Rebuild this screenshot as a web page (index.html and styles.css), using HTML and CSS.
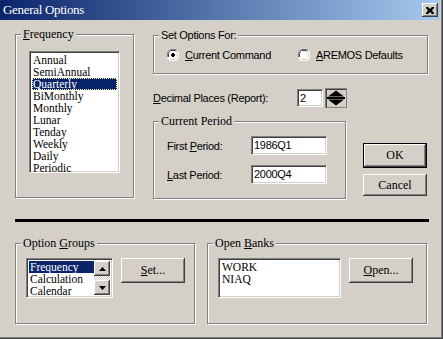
FILE: index.html
```html
<!DOCTYPE html>
<html lang="en">
<head>
    <meta charset="UTF-8">
    <title>General Options</title>
    <link rel="stylesheet" href="styles.css">
</head>
<body>
    <div class="window">
        <div class="titlebar">
            <span class="title">General Options</span>
            <div class="close-btn">
                <svg width="8" height="7" viewBox="0 0 8 7"><path d="M0 0h2l2 2 2-2h2v1l-2 2.5 2 2.5v1h-2l-2-2-2 2h-2v-1l2-2.5-2-2.5z" fill="#000"/></svg>
            </div>
        </div>

        <div class="dialog-body">
            <div class="top-row">
                <fieldset class="group freq-group">
                    <legend class="serif"><u>F</u>requency</legend>
                    <div class="listbox freq-list">
                        <div class="item">Annual</div>
                        <div class="item">SemiAnnual</div>
                        <div class="item selected focus">Quarterly</div>
                        <div class="item">BiMonthly</div>
                        <div class="item">Monthly</div>
                        <div class="item">Lunar</div>
                        <div class="item">Tenday</div>
                        <div class="item">Weekly</div>
                        <div class="item">Daily</div>
                        <div class="item">Periodic</div>
                    </div>
                </fieldset>

                <div class="right-col">
                    <fieldset class="group setfor-group">
                        <legend class="sans">Set Options For:</legend>
                        <div class="radio-row">
                            <label class="radio">
                                <svg width="12" height="12" viewBox="0 0 12 12">
                                    <path d="M4 0h4l2 1 1 1 1 2v4l-1 2-1 1-2 1h-4l-2-1-1-1-1-2v-4l1-2 1-1z" fill="#fff"/>
                                    <path d="M0.5 8V4l1-2 1-1 1.5-0.5h4l2 0.5" fill="none" stroke="#808080"/>
                                    <path d="M1.5 8V4.5l1-2 1-1h4.5l1.5 1" fill="none" stroke="#404040"/>
                                    <path d="M11.5 4v4l-1 2-1 1-1.5 0.5h-4l-2-0.5" fill="none" stroke="#fff"/>
                                    <path d="M10.5 4v3.5l-1 2-1 1h-4.5l-1.5-1" fill="none" stroke="#d4d0c8"/>
                                    <rect x="4" y="5" width="4" height="2" fill="#000"/>
                                    <rect x="5" y="4" width="2" height="4" fill="#000"/>
                                </svg>
                                <span><u>C</u>urrent Command</span>
                            </label>
                            <label class="radio second">
                                <svg width="12" height="12" viewBox="0 0 12 12">
                                    <path d="M4 0h4l2 1 1 1 1 2v4l-1 2-1 1-2 1h-4l-2-1-1-1-1-2v-4l1-2 1-1z" fill="#fff"/>
                                    <path d="M0.5 8V4l1-2 1-1 1.5-0.5h4l2 0.5" fill="none" stroke="#808080"/>
                                    <path d="M1.5 8V4.5l1-2 1-1h4.5l1.5 1" fill="none" stroke="#404040"/>
                                    <path d="M11.5 4v4l-1 2-1 1-1.5 0.5h-4l-2-0.5" fill="none" stroke="#fff"/>
                                    <path d="M10.5 4v3.5l-1 2-1 1h-4.5l-1.5-1" fill="none" stroke="#d4d0c8"/>
                                </svg>
                                <span><u>A</u>REMOS Defaults</span>
                            </label>
                        </div>
                    </fieldset>

                    <div class="decimal-row sans">
                        <span class="decimal-label"><u>D</u>ecimal Places (Report):</span>
                        <div class="edit decimal-edit">2</div>
                        <div class="spin">
                            <svg width="18" height="16" viewBox="0 0 18 16">
                                <polygon points="9,0.5 17,6.5 1,6.5" fill="#000"/>
                                <rect x="0" y="7" width="18" height="2" fill="#000"/>
                                <polygon points="1,9.5 17,9.5 9,15.5" fill="#000"/>
                            </svg>
                        </div>
                    </div>

                    <div class="period-row">
                        <fieldset class="group period-group">
                            <legend class="serif">Current Period</legend>
                            <div class="period-fields sans">
                                <div class="field-row">
                                    <span class="field-label">First <u>P</u>eriod:</span>
                                    <div class="edit period-edit">1986Q1</div>
                                </div>
                                <div class="field-row">
                                    <span class="field-label"><u>L</u>ast Period:</span>
                                    <div class="edit period-edit">2000Q4</div>
                                </div>
                            </div>
                        </fieldset>

                        <div class="button-col">
                            <div class="btn default-btn"><span>OK</span></div>
                            <div class="btn cancel-btn">Cancel</div>
                        </div>
                    </div>
                </div>
            </div>

            <div class="separator"></div>

            <div class="bottom-row">
                <fieldset class="group groups-group">
                    <legend class="serif">Option <u>G</u>roups</legend>
                    <div class="inner-row">
                        <div class="listbox groups-list">
                            <div class="list-items">
                                <div class="item selected">Frequency</div>
                                <div class="item">Calculation</div>
                                <div class="item">Calendar</div>
                            </div>
                            <div class="scrollbar">
                                <div class="sb-btn">
                                    <svg width="7" height="4" viewBox="0 0 7 4"><polygon points="3.5,0 7,4 0,4" fill="#000"/></svg>
                                </div>
                                <div class="sb-track"></div>
                                <div class="sb-btn">
                                    <svg width="7" height="4" viewBox="0 0 7 4"><polygon points="0,0 7,0 3.5,4" fill="#000"/></svg>
                                </div>
                            </div>
                        </div>
                        <div class="btn side-btn"><u>S</u>et...</div>
                    </div>
                </fieldset>

                <fieldset class="group banks-group">
                    <legend class="serif">Open <u>B</u>anks</legend>
                    <div class="inner-row">
                        <div class="listbox banks-list">
                            <div class="item">WORK</div>
                            <div class="item">NIAQ</div>
                        </div>
                        <div class="btn side-btn"><u>O</u>pen...</div>
                    </div>
                </fieldset>
            </div>
        </div>
    </div>
</body>
</html>
```

FILE: styles.css
```css
body {
    margin: 0;
    padding: 0;
    background-color: #d4d0c8;
}

.serif {
    font-family: 'Liberation Serif', 'Times New Roman', serif;
    font-size: 12px;
}

.sans {
    font-family: 'Liberation Sans', Arial, sans-serif;
    font-size: 11px;
    letter-spacing: -0.3px;
}

u {
    text-decoration-thickness: 1px;
    text-underline-offset: 1px;
}

/* window frame */
.window {
    width: 443px;
    height: 339px;
    box-sizing: border-box;
    background-color: #d4d0c8;
    border-right: 1px solid #404040;
    border-bottom: 1px solid #404040;
    box-shadow: inset -1px -1px 0 #808080;
    overflow: hidden;
}

.titlebar {
    height: 20px;
    margin-right: 2px;
    display: flex;
    align-items: center;
    justify-content: space-between;
    padding: 0 2px 0 3px;
    background: linear-gradient(to right, #0a246a, #a6caf0);
}

.title {
    color: #fff;
    font-family: 'Liberation Serif', 'Times New Roman', serif;
    font-size: 13px;
    letter-spacing: -0.3px;
}

.close-btn {
    width: 16px;
    height: 14px;
    box-sizing: border-box;
    background-color: #d4d0c8;
    display: flex;
    align-items: center;
    justify-content: center;
    box-shadow: inset -1px -1px 0 #404040, inset 1px 1px 0 #fff, inset -2px -2px 0 #808080;
}

.dialog-body {
    padding: 7px 0 0 15px;
}

/* group boxes */
.group {
    margin: 0;
    padding: 0;
    box-sizing: border-box;
    border: 1px solid #808080;
    box-shadow: inset 1px 1px 0 #fff, 1px 1px 0 #fff;
    min-width: 0;
}

.group legend {
    margin-left: 5px;
    padding: 0 2px;
    line-height: 14px;
    height: 14px;
    background-color: #d4d0c8;
}

.top-row {
    display: flex;
    align-items: flex-start;
}

.freq-group {
    width: 119px;
    height: 171px;
}

.right-col {
    margin-left: 19px;
    margin-top: 1px;
}

.setfor-group {
    width: 275px;
    height: 46px;
}

.radio-row {
    display: flex;
    margin-top: 7px;
    padding-left: 13px;
    height: 12px;
    align-items: center;
}

.radio {
    display: flex;
    align-items: center;
    font-family: 'Liberation Sans', Arial, sans-serif;
    font-size: 11px;
    letter-spacing: -0.3px;
}

.radio span {
    margin-left: 6px;
}

.radio.second {
    margin-left: 27px;
}

.decimal-row {
    margin-top: 14px;
    height: 20px;
    display: flex;
    align-items: center;
}

.decimal-label {
    width: 144px;
}

/* sunken edit fields */
.edit, .listbox {
    box-sizing: border-box;
    background-color: #fff;
    border: 1px solid;
    border-color: #808080 #fff #fff #808080;
    box-shadow: inset 1px 1px 0 #404040, inset -1px -1px 0 #d4d0c8;
}

.edit {
    padding: 2px 0 0 2px;
    line-height: 13px;
}

.decimal-edit {
    width: 26px;
    height: 18px;
}

.spin {
    width: 22px;
    height: 20px;
    margin-left: 2px;
    box-sizing: border-box;
    background-color: #d4d0c8;
    border: 1px solid #808080;
    box-shadow: inset 1px 1px 0 #404040;
    display: flex;
    align-items: center;
    justify-content: center;
}

.period-row {
    display: flex;
    align-items: flex-start;
    margin-top: 6px;
}

.period-group {
    width: 193px;
    height: 85px;
}

.period-fields {
    padding: 8px 0 0 13px;
}

.field-row {
    display: flex;
    align-items: center;
    height: 19px;
}

.field-row + .field-row {
    margin-top: 10px;
}

.field-label {
    width: 84px;
}

.period-edit {
    width: 76px;
    height: 19px;
}

/* buttons */
.btn {
    box-sizing: border-box;
    width: 64px;
    height: 23px;
    background-color: #d4d0c8;
    font-family: 'Liberation Serif', 'Times New Roman', serif;
    font-size: 12px;
    display: flex;
    align-items: center;
    justify-content: center;
    box-shadow: inset -1px -1px 0 #404040, inset 1px 1px 0 #fff, inset -2px -2px 0 #808080;
}

.button-col {
    margin-left: 17px;
    padding-top: 29px;
}

.default-btn {
    height: 25px;
    border: 1px solid #000;
}

.cancel-btn {
    margin-top: 6px;
    height: 22px;
}

.separator {
    margin-top: 20px;
    width: 414px;
    height: 3px;
    background-color: #000;
}

.bottom-row {
    display: flex;
    margin-top: 14px;
}

.groups-group {
    width: 180px;
    height: 88px;
}

.banks-group {
    width: 220px;
    height: 88px;
    margin-left: 12px;
}

.inner-row {
    display: flex;
    align-items: flex-start;
    padding: 8px 0 0 10px;
}

.side-btn {
    margin-left: 8px;
    height: 25px;
}

/* list boxes */
.listbox {
    font-family: 'Liberation Serif', 'Times New Roman', serif;
    font-size: 11.5px;
    padding: 2px;
}

.item {
    height: 12px;
    line-height: 12px;
    padding-left: 1px;
    white-space: nowrap;
}

.item.selected {
    background-color: #0a246a;
    color: #fff;
}

.item.focus {
    outline: 1px dotted #ffffa0;
    outline-offset: -1px;
}

.freq-list {
    margin: 10px 0 0 13px;
    width: 91px;
    height: 122px;
}

.groups-list {
    width: 87px;
    height: 40px;
    display: flex;
}

.list-items {
    flex: 1;
}

.scrollbar {
    width: 16px;
    display: flex;
    flex-direction: column;
}

.sb-btn {
    height: 15px;
    box-sizing: border-box;
    background-color: #d4d0c8;
    display: flex;
    align-items: center;
    justify-content: center;
    box-shadow: inset -1px -1px 0 #404040, inset 1px 1px 0 #fff, inset -2px -2px 0 #808080;
}

.sb-track {
    flex: 1;
    background-image: conic-gradient(#fff 25%, #d4d0c8 0 50%, #fff 0 75%, #d4d0c8 0);
    background-size: 2px 2px;
}

.banks-list {
    width: 123px;
    height: 40px;
}
```
